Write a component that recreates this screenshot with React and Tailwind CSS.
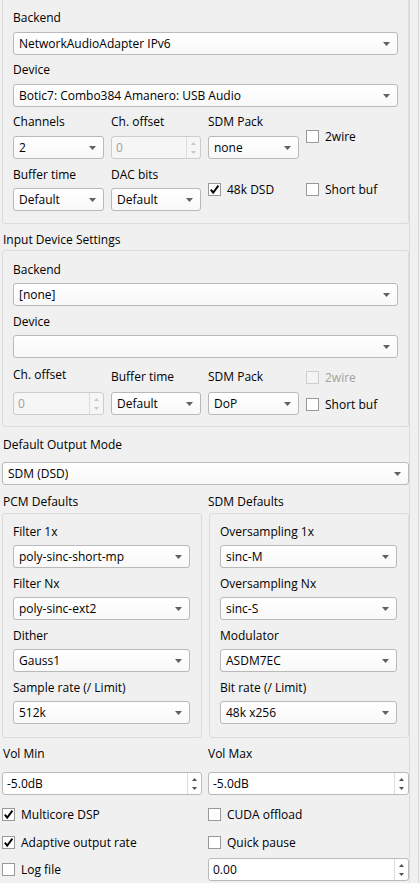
import React from 'react';

const Label = ({ children, className = '', disabled = false }) => (
  <div className={`h-[16px] leading-[16px] whitespace-nowrap ${disabled ? 'text-[#a0a0a0]' : ''} ${className}`}>
    {children}
  </div>
);

const Combo = ({ value, className = '' }) => (
  <div
    className={`h-[23px] flex items-center justify-between pl-[5px] pr-[7px] border border-[#b9b9b9] rounded-[3px] bg-linear-to-b from-white to-[#f8f8f8] ${className}`}
  >
    <span className="truncate leading-[16px]">{value}</span>
    <svg width="7" height="4" viewBox="0 0 7 4" className="shrink-0">
      <path d="M0 0H7L3.5 4Z" fill="#606060" />
    </svg>
  </div>
);

const Spin = ({ value, disabled = false, className = '' }) => {
  const fill = disabled ? '#c8c8c8' : '#505050';
  return (
    <div
      className={`h-[23px] flex border rounded-[3px] ${
        disabled ? 'border-[#cccccc] bg-[#f6f6f6] text-[#a0a0a0]' : 'border-[#b9b9b9] bg-white'
      } ${className}`}
    >
      <div className="flex-1 flex items-center pl-[4px] leading-[16px]">{value}</div>
      <div className="w-[14px] border-l border-[#dcdcdc] flex flex-col items-center justify-center gap-[6px]">
        <svg width="5" height="3" viewBox="0 0 5 3">
          <path d="M0 3H5L2.5 0Z" fill={fill} />
        </svg>
        <svg width="5" height="3" viewBox="0 0 5 3">
          <path d="M0 0H5L2.5 3Z" fill={fill} />
        </svg>
      </div>
    </div>
  );
};

const Check = ({ label, checked = false, disabled = false }) => (
  <div className="flex items-center h-[13px]">
    <div
      className={`w-[13px] h-[13px] shrink-0 border flex items-center justify-center ${
        disabled ? 'border-[#cfcfcf] bg-[#f4f4f4]' : 'border-[#999999] bg-white'
      }`}
    >
      {checked && (
        <svg width="11" height="11" viewBox="0 0 11 11">
          <polyline points="1.8,5.6 4.2,8.6 9.4,1.6" fill="none" stroke="#000" strokeWidth="1.9" />
        </svg>
      )}
    </div>
    <span className={`ml-[6px] leading-[16px] whitespace-nowrap ${disabled ? 'text-[#a0a0a0]' : ''}`}>{label}</span>
  </div>
);

const Field = ({ label, value, gap = 'mt-[5px]' }) => (
  <>
    <Label className="mt-[8px] first:mt-0">{label}</Label>
    <Combo className={gap} value={value} />
  </>
);

export default function App() {
  return (
    <div className="w-[420px] h-[883px] overflow-hidden bg-[#f0f0f0] flex text-[12px] text-black font-['Open_Sans',sans-serif]">
      <div className="w-[409px] shrink-0 pl-[2px] flex flex-col">
        {/* Output device group (top cut off) */}
        <div className="h-[224px] shrink-0 border border-t-0 border-[#dcdcdc] rounded-b-[3px] px-[10px] flex flex-col">
          <Label className="mt-[10px]">Backend</Label>
          <Combo className="mt-[6px]" value="NetworkAudioAdapter IPv6" />
          <Label className="mt-[7px]">Device</Label>
          <Combo className="mt-[6px]" value="Botic7: Combo384 Amanero: USB Audio" />
          <div className="mt-[7px] grid grid-cols-[91px_90px_91px_1fr] gap-x-[7px]">
            <div>
              <Label>Channels</Label>
              <Combo className="mt-[6px]" value="2" />
            </div>
            <div>
              <Label>Ch. offset</Label>
              <Spin className="mt-[6px]" value="0" disabled />
            </div>
            <div>
              <Label>SDM Pack</Label>
              <Combo className="mt-[6px]" value="none" />
            </div>
            <div className="pt-[16px]">
              <Check label="2wire" />
            </div>
          </div>
          <div className="mt-[8px] grid grid-cols-[91px_90px_91px_1fr] gap-x-[7px]">
            <div>
              <Label>Buffer time</Label>
              <Combo className="mt-[5px]" value="Default" />
            </div>
            <div>
              <Label>DAC bits</Label>
              <Combo className="mt-[5px]" value="Default" />
            </div>
            <div className="pt-[16px]">
              <Check checked label="48k DSD" />
            </div>
            <div className="pt-[16px]">
              <Check label="Short buf" />
            </div>
          </div>
        </div>

        {/* Input device settings */}
        <Label className="mt-[8px] pl-[1px]">Input Device Settings</Label>
        <div className="mt-[2px] h-[177px] shrink-0 border border-[#dcdcdc] rounded-[3px] px-[10px] flex flex-col">
          <Label className="mt-[11px]">Backend</Label>
          <Combo className="mt-[5px]" value="[none]" />
          <Label className="mt-[8px]">Device</Label>
          <Combo className="mt-[5px]" value="" />
          <div className="mt-[9px] grid grid-cols-[91px_90px_91px_1fr] gap-x-[7px]">
            <div>
              <Label>Ch. offset</Label>
              <Spin className="mt-[9px]" value="0" disabled />
            </div>
            <div>
              <Label className="mt-[2px]">Buffer time</Label>
              <Combo className="mt-[7px]" value="Default" />
            </div>
            <div>
              <Label className="mt-[2px]">SDM Pack</Label>
              <Combo className="mt-[7px]" value="DoP" />
            </div>
            <div className="pt-[4px]">
              <Check disabled label="2wire" />
              <div className="mt-[14px]">
                <Check label="Short buf" />
              </div>
            </div>
          </div>
        </div>

        {/* Output mode */}
        <Label className="mt-[10px] pl-[1px]">Default Output Mode</Label>
        <Combo className="mt-[9px]" value="SDM (DSD)" />

        <div className="mt-[9px] grid grid-cols-[200px_201px] gap-x-[6px]">
          <Label className="pl-[1px]">PCM Defaults</Label>
          <Label>SDM Defaults</Label>
        </div>
        <div className="mt-[3px] grid grid-cols-[200px_201px] gap-x-[6px]">
          <div className="h-[225px] border border-[#dcdcdc] rounded-[3px] pl-[10px] pr-[11px] pt-[10px] flex flex-col">
            <Field label="Filter 1x" value="poly-sinc-short-mp" />
            <Field label="Filter Nx" value="poly-sinc-ext2" />
            <Field label="Dither" value="Gauss1" />
            <Field label="Sample rate (/ Limit)" value="512k" />
          </div>
          <div className="ml-[1px] h-[225px] border border-[#dcdcdc] rounded-[3px] pl-[10px] pr-[11px] pt-[10px] flex flex-col">
            <Field label="Oversampling 1x" value="sinc-M" />
            <Field label="Oversampling Nx" value="sinc-S" />
            <Field label="Modulator" value="ASDM7EC" />
            <Field label="Bit rate (/ Limit)" value="48k x256" />
          </div>
        </div>

        {/* Volume and flags */}
        <div className="mt-[8px] grid grid-cols-[200px_201px] gap-x-[6px]">
          <Label className="pl-[1px]">Vol Min</Label>
          <Label>Vol Max</Label>
        </div>
        <div className="mt-[10px] grid grid-cols-[200px_201px] gap-x-[6px]">
          <Spin value="-5.0dB" />
          <Spin value="-5.0dB" />
        </div>
        <div className="mt-[13px] grid grid-cols-[200px_201px] gap-x-[6px]">
          <Check checked label="Multicore DSP" />
          <Check label="CUDA offload" />
        </div>
        <div className="mt-[15px] grid grid-cols-[200px_201px] gap-x-[6px]">
          <Check checked label="Adaptive output rate" />
          <Check label="Quick pause" />
        </div>
        <div className="mt-[9px] grid grid-cols-[200px_201px] gap-x-[6px] items-center">
          <Check label="Log file" />
          <Spin value="0.00" />
        </div>
      </div>
      <div className="w-[10px] shrink-0 border-x border-[#dadada] bg-[#f0f0f0]" />
    </div>
  );
}
